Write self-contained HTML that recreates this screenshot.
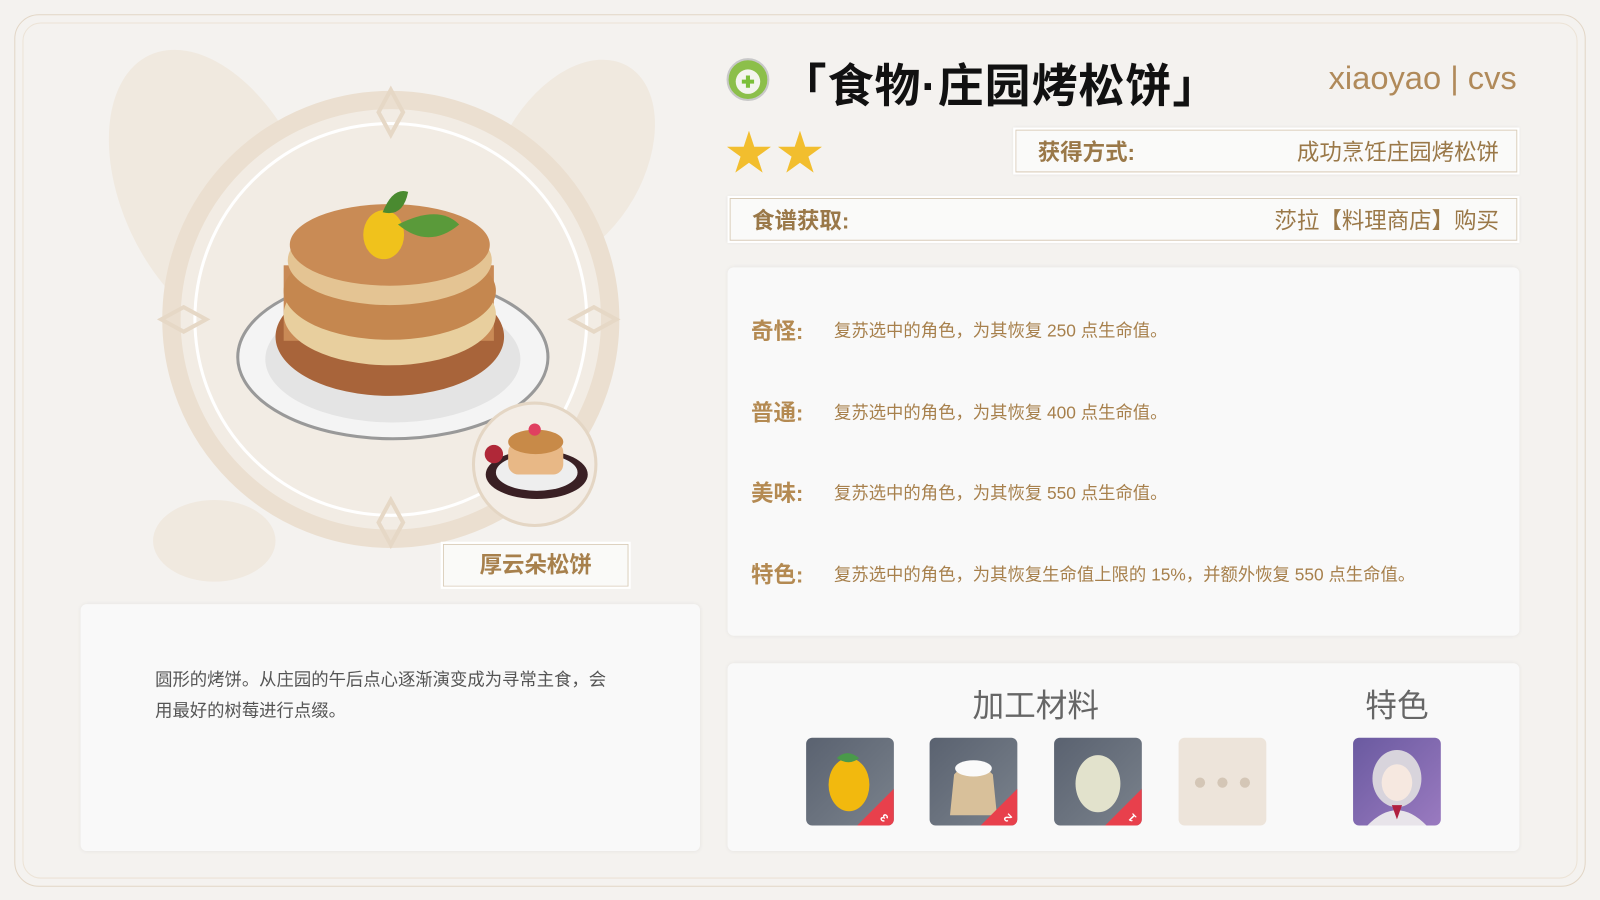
<!DOCTYPE html>
<html><head><meta charset="utf-8"><style>
*{margin:0;padding:0;box-sizing:border-box}
body{width:1600px;height:900px;overflow:hidden;background:#f4f2ef;font-family:"Liberation Sans","Noto Sans CJK SC",sans-serif;position:relative}
#w{position:absolute;left:0;top:0;width:1568px;height:882px;transform:scale(1.02041);transform-origin:0 0}
.abs{position:absolute}
.frame{left:14px;top:14px;width:1540px;height:855px;border:1px solid #e2d6c6;border-radius:24px}
.frame2{left:22px;top:22px;width:1524px;height:839px;border:1px solid #ece3d6;border-radius:18px}
.panel{background:#f9f9f9;border-radius:6px;box-shadow:0 0 4px rgba(0,0,0,.06)}
.box{background:#fafaf9;border:2px solid #fff;box-shadow:0 0 0 1px #d9ccb8 inset,0 0 3px rgba(0,0,0,.08);color:#9a7848;font-size:22px;display:flex;justify-content:space-between;align-items:center;padding:0 18px 0 22px}
.box b{font-weight:bold}
.eff{left:736px;font-size:22px;font-weight:bold;color:#b48a52}
.eff span{font-weight:normal;font-size:17px;margin-left:30px;color:#a7804c;position:relative;top:-2px}
.mat{width:86px;height:86px;border-radius:6px;top:723px;background:linear-gradient(135deg,#5a6270,#7a828c);overflow:hidden}
.mat i{position:absolute;right:0;bottom:0;width:0;height:0;border-left:36px solid transparent;border-bottom:36px solid #e8404c}
.mat em{position:absolute;right:6px;bottom:2px;color:#fff;font-size:11px;font-style:normal;font-weight:bold;transform:rotate(-135deg)}
</style></head><body><div id="w">
<div class="abs frame"></div><div class="abs frame2"></div>
<svg class="abs" style="left:60px;top:30px" width="640" height="580">
<ellipse cx="150" cy="160" rx="90" ry="150" fill="#efe6db" opacity=".8" transform="rotate(-25 150 160)"/>
<ellipse cx="500" cy="130" rx="70" ry="110" fill="#efe6db" opacity=".8" transform="rotate(30 500 130)"/>
<ellipse cx="150" cy="500" rx="60" ry="40" fill="#efe6db" opacity=".8"/>
</svg>
<svg class="abs" style="left:150px;top:80px" width="470" height="470">
<circle cx="233" cy="233" r="215" fill="#f2ece4" stroke="#ebdfd0" stroke-width="18"/>
<circle cx="233" cy="233" r="192" fill="none" stroke="#fff" stroke-width="3"/>
<path d="M233 8 l12 22 l-12 22 l-12 -22z M233 410 l12 22 l-12 22 l-12 -22z M8 233 l22 -12 l22 12 l-22 12z M410 233 l22 -12 l22 12 l-22 12z" fill="none" stroke="#e6d8c6" stroke-width="4"/>
<ellipse cx="235" cy="270" rx="152" ry="80" fill="#f4f4f4" stroke="#999" stroke-width="3"/>
<ellipse cx="235" cy="272" rx="125" ry="62" fill="#e4e4e4"/>
<ellipse cx="232" cy="250" rx="112" ry="58" fill="#a8643a"/>
<rect x="128" y="180" width="206" height="74" fill="#c98a56"/>
<ellipse cx="232" cy="228" rx="104" ry="50" fill="#e8cf9e"/>
<ellipse cx="232" cy="205" rx="104" ry="48" fill="#c5874f"/>
<ellipse cx="232" cy="175" rx="100" ry="44" fill="#e4c493"/>
<ellipse cx="232" cy="160" rx="98" ry="40" fill="#c98b55"/>
<ellipse cx="226" cy="150" rx="20" ry="24" fill="#f0c21c"/>
<path d="M240 140 q40 -20 60 0 q-30 25 -60 0z" fill="#5a9a3a"/>
<path d="M225 128 q10 -25 25 -20 q-5 25 -25 20z" fill="#4a8a30"/>
</svg>
<svg class="abs" style="left:462px;top:393px" width="124" height="124">
<circle cx="62" cy="62" r="60" fill="#f3ede6" stroke="#e4d6c4" stroke-width="3"/>
<ellipse cx="64" cy="72" rx="50" ry="24" fill="#3a2024"/>
<ellipse cx="64" cy="70" rx="40" ry="18" fill="#eee"/>
<rect x="36" y="40" width="54" height="32" rx="10" fill="#e8b886"/>
<ellipse cx="63" cy="40" rx="27" ry="12" fill="#c88a48"/>
<circle cx="62" cy="28" r="6" fill="#e04060"/>
<circle cx="22" cy="52" r="9" fill="#b02838"/>
</svg>
<div class="abs" style="left:432px;top:531px;width:186px;height:46px;background:#fafaf8;border:2px solid #fff;box-shadow:0 0 0 1px #d9ccb8 inset;color:#a7804c;font-size:22px;font-weight:bold;text-align:center;line-height:42px">厚云朵松饼</div>
<div class="abs panel" style="left:79px;top:592px;width:607px;height:242px"></div>
<div class="abs" style="left:152px;top:652px;width:445px;font-size:17px;line-height:30px;color:#555">圆形的烤饼。从庄园的午后点心逐渐演变成为寻常主食，会用最好的树莓进行点缀。</div>
<svg class="abs" style="left:711px;top:56px" width="44" height="44">
<circle cx="22" cy="22" r="20" fill="#8cbf4a" stroke="#c8c8c8" stroke-width="2"/>
<circle cx="22" cy="24" r="12" fill="#f4f4ee"/>
<path d="M22 18v12M16 24h12" stroke="#7cbf3a" stroke-width="4"/>
</svg>
<div class="abs" style="left:765px;top:48px;font-size:45px;font-weight:bold;color:#111;letter-spacing:1px">「食物·庄园烤松饼」</div>
<div class="abs" style="left:1302px;top:58px;font-size:32px;color:#b08a5a">xiaoyao | cvs</div>
<div class="abs" style="left:711px;top:114px;font-size:46px;color:#f2be2e;letter-spacing:4px">★★</div>
<div class="abs box" style="left:993px;top:125px;width:496px;height:46px"><b>获得方式:</b><span>成功烹饪庄园烤松饼</span></div>
<div class="abs box" style="left:713px;top:192px;width:776px;height:46px"><b>食谱获取:</b><span>莎拉【料理商店】购买</span></div>
<div class="abs panel" style="left:713px;top:262px;width:776px;height:361px"></div>
<div class="abs eff" style="top:307px">奇怪:<span>复苏选中的角色，为其恢复 250 点生命值。</span></div>
<div class="abs eff" style="top:387px">普通:<span>复苏选中的角色，为其恢复 400 点生命值。</span></div>
<div class="abs eff" style="top:466px">美味:<span>复苏选中的角色，为其恢复 550 点生命值。</span></div>
<div class="abs eff" style="top:546px">特色:<span>复苏选中的角色，为其恢复生命值上限的 15%，并额外恢复 550 点生命值。</span></div>
<div class="abs panel" style="left:713px;top:650px;width:776px;height:184px"></div>
<div class="abs" style="left:953px;top:666px;font-size:31px;color:#666">加工材料</div>
<div class="abs" style="left:1338px;top:666px;font-size:31px;color:#666">特色</div>
<div class="abs mat" style="left:790px"><svg width="86" height="86"><ellipse cx="42" cy="46" rx="20" ry="26" fill="#f2b90e"/><path d="M30 20 q10 -10 22 0 q-10 8 -22 0z" fill="#4a9a4a"/></svg><i></i><em>3</em></div>
<div class="abs mat" style="left:911px"><svg width="86" height="86"><path d="M24 36 q18 -20 38 0 l4 40 h-46z" fill="#d8c09a"/><ellipse cx="43" cy="30" rx="18" ry="8" fill="#fafafa"/></svg><i></i><em>2</em></div>
<div class="abs mat" style="left:1033px"><svg width="86" height="86"><ellipse cx="43" cy="45" rx="22" ry="28" fill="#e2e2cc"/></svg><i></i><em>1</em></div>
<div class="abs" style="left:1155px;top:723px;width:86px;height:86px;border-radius:6px;background:#ede4da"><svg width="86" height="86"><circle cx="21" cy="44" r="5" fill="#d4c6b6"/><circle cx="43" cy="44" r="5" fill="#d4c6b6"/><circle cx="65" cy="44" r="5" fill="#d4c6b6"/></svg></div>
<div class="abs" style="left:1326px;top:723px;width:86px;height:86px;border-radius:6px;background:linear-gradient(135deg,#6a5aa0,#9a7ac0);overflow:hidden"><svg width="86" height="86"><ellipse cx="43" cy="40" rx="24" ry="28" fill="#d8d4dc"/><ellipse cx="43" cy="44" rx="15" ry="18" fill="#f6e8e0"/><path d="M14 86 q29 -30 58 0z" fill="#e8e4ea"/><path d="M38 66 l5 14 l5 -14z" fill="#b02040"/></svg></div>
</div></body></html>
